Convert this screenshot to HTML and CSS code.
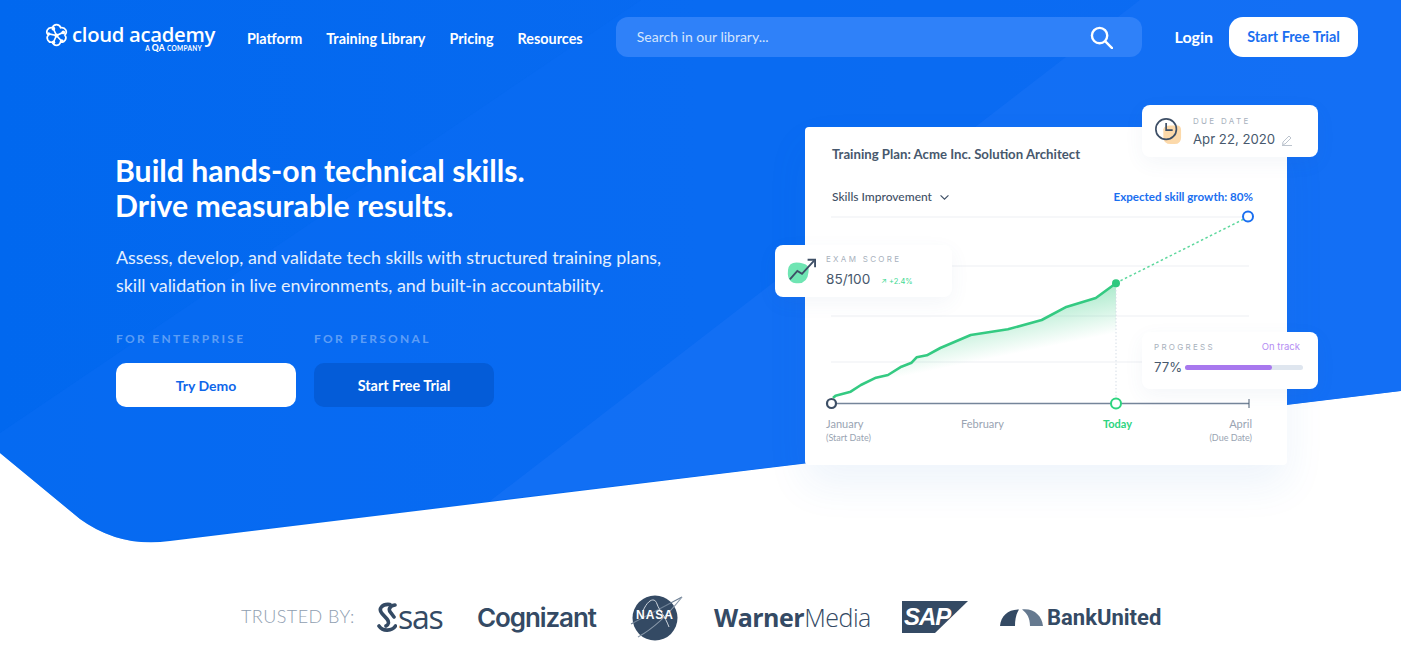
FILE: index.html
```html
<!DOCTYPE html>
<html lang="en">
<head>
    <meta charset="UTF-8">
    <meta name="viewport" content="width=device-width, initial-scale=1.0">
    <title>Cloud Academy</title>
    <link rel="stylesheet" href="styles.css">
</head>
<body>
    <!-- Blue background shape -->
    <svg class="hero-bg" viewBox="0 0 1401 663" aria-hidden="true">
        <defs>
            <linearGradient id="bgBlue" x1="0" y1="0" x2="1" y2="0">
                <stop offset="0" stop-color="#0168ef"/>
                <stop offset="1" stop-color="#0f6cf2"/>
            </linearGradient>
            <clipPath id="bgClip">
                <path d="M0 0H1401V391L170 541Q120 548 80 519L0 453Z"/>
            </clipPath>
        </defs>
        <g clip-path="url(#bgClip)">
            <rect width="1401" height="663" fill="url(#bgBlue)"/>
            <path d="M0 433L641 0H1401V391L490 501L0 560Z" fill="#0a6cf3" opacity="0.5"/>
            <path d="M490 501L1140 0H1401V391Z" fill="#1a72f5" opacity="0.55"/>
        </g>
    </svg>

    <!-- Navbar -->
    <nav class="navbar">
        <a class="logo" href="#">
            <svg class="logo-mark" viewBox="0 0 24 24" fill="none" stroke="#fff" stroke-width="1.600">
                <path d="M12 1.500c2.400 0 3.600 1.600 4 3 2-.4 4 .4 5 2.300 1 2-.1 3.800-1 4.700 1 1.200 1.500 3 .4 4.800-1.100 1.800-3 2.300-4.400 2-.6 1.600-2 3.200-4 3.200s-3.400-1.500-4-3.200c-1.500.4-3.400-.2-4.400-2-1-1.900-.5-3.600.5-4.800-1-1-2-2.800-1-4.700 1-1.900 3-2.700 5-2.300.5-1.500 1.600-3 3.900-3z"/>
                <path d="M12 12L9 5.500M12 12l6.500-3M12 12l5 5.500M12 12l-3 6.500M12 12L4.500 10.500"/>
                <g fill="#fff" stroke="none">
                    <circle cx="12" cy="12" r="2"/>
                    <circle cx="9" cy="5.500" r="1.800"/>
                    <circle cx="18.500" cy="9" r="1.800"/>
                    <circle cx="17" cy="17.500" r="1.800"/>
                    <circle cx="9" cy="18.500" r="1.800"/>
                    <circle cx="4.500" cy="10.500" r="1.600"/>
                </g>
            </svg>
            <span class="logo-text">
                <span class="logo-name">cloud academy</span>
                <span class="logo-sub">A <b>QA</b> COMPANY</span>
            </span>
        </a>
        <div class="nav-links">
            <a href="#">Platform</a>
            <a href="#">Training Library</a>
            <a href="#">Pricing</a>
            <a href="#">Resources</a>
        </div>
        <div class="search">
            <span>Search in our library...</span>
            <svg viewBox="0 0 24 24" fill="none" stroke="#fff" stroke-width="2.500" stroke-linecap="round">
                <circle cx="10" cy="10" r="8"/>
                <path d="M16 16l7 7"/>
            </svg>
        </div>
        <a class="login" href="#">Login</a>
        <a class="nav-trial" href="#">Start Free Trial</a>
    </nav>

    <main class="hero">
        <section class="hero-text">
            <h1>Build hands-on technical skills.<br>Drive measurable results.</h1>
            <p>Assess, develop, and validate tech skills with structured training plans, skill validation in live environments, and built-in accountability.</p>
            <div class="cta-row">
                <div class="cta">
                    <span class="cta-label">FOR ENTERPRISE</span>
                    <a class="btn btn-white" href="#">Try Demo</a>
                </div>
                <div class="cta">
                    <span class="cta-label">FOR PERSONAL</span>
                    <a class="btn btn-dark" href="#">Start Free Trial</a>
                </div>
            </div>
        </section>

        <!-- Training plan card -->
        <section class="plan-card">
            <svg class="chart" viewBox="805 127 482 338" aria-hidden="true">
                <defs>
                    <linearGradient id="areaFill" gradientUnits="userSpaceOnUse" x1="998" y1="306" x2="1008" y2="355">
                        <stop offset="0" stop-color="#2fcb80" stop-opacity="0.42"/>
                        <stop offset="1" stop-color="#2fcb80" stop-opacity="0"/>
                    </linearGradient>
                </defs>
                <g stroke="#f3f5f8" stroke-width="1.500">
                    <path d="M831 217H1249M831 266H1249M831 316H1249M831 362H1249"/>
                </g>
                <path d="M835.500 395.700L850.700 391.700L860.900 385L876 377.700L888 375L901.400 366.700L911.600 362.700L916.600 357.300L926.800 355.300L940.300 348L970.700 335L1007.900 329.300L1041.700 320L1065.400 307.300L1095.800 298L1116 283.300V400H836Z" fill="url(#areaFill)"/>
                <path d="M1116 283V398" stroke="#d5dde6" stroke-dasharray="1.500 2"/>
                <path d="M1116 283L1244 219" stroke="#5fd89e" stroke-width="1.500" stroke-dasharray="2.500 2.500"/>
                <path d="M831 403.500H1249" stroke="#75859a" stroke-width="1.600"/>
                <path d="M1249 399V408" stroke="#4a5c72"/>
                <path d="M833 398L835.500 395.700L850.700 391.700L860.900 385L876 377.700L888 375L901.400 366.700L911.600 362.700L916.600 357.300L926.800 355.300L940.300 348L970.700 335L1007.900 329.300L1041.700 320L1065.400 307.300L1095.800 298L1116 283.300" fill="none" stroke="#34ca82" stroke-width="2.600" stroke-linejoin="round"/>
                <circle cx="1116" cy="283.300" r="4" fill="#2ec97f"/>
                <circle cx="1248" cy="216.500" r="5" fill="#fff" stroke="#1a6ff0" stroke-width="2"/>
                <circle cx="831.500" cy="403.500" r="4.500" fill="#fff" stroke="#3d4f66" stroke-width="2.200"/>
                <circle cx="1116" cy="403.500" r="5" fill="#fff" stroke="#2ed47f" stroke-width="2"/>
            </svg>

            <h2>Training Plan: Acme Inc. Solution Architect</h2>
            <div class="plan-row">
                <span class="plan-select">Skills Improvement
                    <svg viewBox="0 0 12 8" fill="none" stroke="#3f5066" stroke-width="1.300"><path d="M1.500 1.500L6 6l4.500-4.500"/></svg>
                </span>
                <span class="plan-growth">Expected skill growth: 80%</span>
            </div>
            <div class="axis-labels">
                <div>January<small>(Start Date)</small></div>
                <div>February</div>
                <div class="axis-today">Today</div>
                <div class="axis-end">April<small>(Due Date)</small></div>
            </div>

            <div class="float-card due-card">
                <svg class="float-icon" viewBox="0 0 30 30" fill="none">
                    <path d="M10 13q1-4 7-4h8q4 0 4 5v8q0 7-7 7h-4q-8 0-8-7z" fill="#fcd9aa"/>
                    <circle cx="13" cy="13" r="11" stroke="#3e4f66" stroke-width="1.800"/>
                    <path d="M13 6.500V14H20" stroke="#3e4f66" stroke-width="1.800"/>
                </svg>
                <div>
                    <span class="float-label">DUE DATE</span>
                    <span class="float-value">Apr 22, 2020
                        <svg class="pencil" viewBox="0 0 12 12" fill="none" stroke="#bcc4ce"><path d="M1.500 10.500L2 8l6-6 2 2-6 6zM1 11.500h10"/></svg>
                    </span>
                </div>
            </div>

            <div class="float-card exam-card">
                <svg class="float-icon" viewBox="0 0 32 30" fill="none">
                    <path d="M1 14q1-8 9-8 4 0 7 1 7 1 6 9-1 12-11 12-5 1-8-2-4-3-3-12z" fill="#6fe5b3"/>
                    <path d="M3 24l8-9 5 3L29 4" stroke="#3e4f66" stroke-width="2"/>
                    <path d="M22 3h8v8" stroke="#3e4f66" stroke-width="2"/>
                </svg>
                <div>
                    <span class="float-label">EXAM SCORE</span>
                    <span class="float-value">85/100 <em>&#8599; +2.4%</em></span>
                </div>
            </div>

            <div class="float-card progress-card">
                <div class="progress-head">
                    <span class="float-label">PROGRESS</span>
                    <span class="on-track">On track</span>
                </div>
                <div class="progress-body">
                    <span class="float-value">77%</span>
                    <span class="bar"><span class="bar-fill" style="width: 74%"></span></span>
                </div>
            </div>
        </section>
    </main>

    <!-- Customer logos -->
    <footer class="trusted">
        <span class="trusted-label">TRUSTED BY:</span>
        <span class="brand brand-sas">
            <svg viewBox="0 0 20 30" fill="none" stroke="#344a64" stroke-width="3.600" stroke-linecap="round">
                <path d="M13 2.500C5 1.500 1 7 5 11.500L10 17C12.500 20 11.500 23 9 24"/>
                <path d="M18 3C12 4 11 8 14 11L17 15"/>
                <path d="M2 24C6 30 15 29 18.500 24"/>
            </svg>
            sas
        </span>
        <span class="brand brand-cognizant">Cognizant</span>
        <span class="brand brand-nasa">
            <svg viewBox="0 0 54 48" fill="none">
                <circle cx="25" cy="25" r="22.500" fill="#344a64"/>
                <path d="M1 31L52 4" stroke="#6e8095" stroke-width="1.200"/>
                <path d="M8 44Q30 32 52 4" stroke="#8a99aa" stroke-width="1.200"/>
                <path d="M13 18c5-12 12-14 14-7 2 6 8 12 12 23" stroke="#cfd6de" stroke-width="1"/>
            </svg>
            <span>NASA</span>
        </span>
        <span class="brand brand-warner"><b>Warner</b>Media</span>
        <span class="brand brand-sap"><span>SAP</span></span>
        <span class="brand brand-bank">
            <svg viewBox="0 0 44 18">
                <path d="M0 18C1 8 8 1.500 19 1.500C16 6 15 12 15 18Z" fill="#344a64"/>
                <path d="M22 1.500C34 0 42 8 43 18H30C30 10 27 5 22 1.500Z" fill="#667a90"/>
            </svg>
            BankUnited
        </span>
    </footer>
</body>
</html>
```

FILE: styles.css
```css
* {
    box-sizing: border-box;
    margin: 0;
    padding: 0;
}

html, body {
    height: 663px;
    overflow: hidden;
}

body {
    font-family: Lato, "Open Sans", sans-serif;
    background-color: #fff;
    color: #344a64;
    position: relative;
}

a {
    color: inherit;
    text-decoration: none;
}

.hero-bg {
    position: absolute;
    top: 0;
    left: 0;
    width: 1401px;
    height: 663px;
}

/* Navbar */
.navbar {
    position: relative;
    display: flex;
    align-items: center;
    height: 74px;
    padding: 17px 43px 17px 44px;
    color: #fff;
}

.logo {
    display: flex;
    align-items: flex-start;
    gap: 3px;
    width: 203px;
    height: 40px;
}

.logo-mark {
    width: 25px;
    height: 25px;
    margin-top: 6px;
    flex: none;
}

.logo-text {
    display: flex;
    flex-direction: column;
    align-items: flex-end;
}

.logo-name {
    font-family: "Open Sans", Lato, sans-serif;
    font-size: 20.300px;
    font-weight: 600;
    letter-spacing: -0.300px;
    line-height: 18px;
    margin-top: 8px;
}

.logo-sub {
    margin-top: 2px;
    margin-right: 13px;
    font-size: 6.500px;
    font-weight: 700;
    letter-spacing: 0.300px;
    line-height: 6px;
}

.logo-sub b {
    font-size: 8.500px;
    line-height: 6px;
}

.nav-links {
    display: flex;
    gap: 24px;
    width: 369px;
    margin-top: 2px;
    font-size: 14.400px;
    font-weight: 700;
}

.search {
    display: flex;
    align-items: center;
    justify-content: space-between;
    width: 526px;
    height: 40px;
    padding: 0 29px 0 21px;
    background-color: #2f81f9;
    border-radius: 12px;
    font-size: 14px;
    color: #d5e5fd;
}

.search span {
    margin-top: -2px;
}

.search svg {
    width: 23px;
    height: 23px;
}

.login {
    margin-left: 33px;
    margin-top: -2px;
    font-size: 16px;
    font-weight: 700;
}

.nav-trial {
    display: flex;
    align-items: center;
    justify-content: center;
    width: 129px;
    height: 40px;
    margin-left: 16px;
    padding-bottom: 2px;
    background-color: #fff;
    border-radius: 14px;
    color: #1a6ff0;
    font-size: 14.400px;
    font-weight: 700;
}

/* Hero */
.hero {
    position: relative;
    display: flex;
    align-items: flex-start;
    padding: 53px 0 0 116px;
}

.hero-text {
    width: 689px;
    padding-top: 26px;
    color: #fff;
}

.hero-text h1 {
    margin-left: -1px;
    font-size: 30.200px;
    font-weight: 700;
    line-height: 35px;
}

.hero-text p {
    width: 560px;
    margin-top: 20px;
    font-size: 17.900px;
    line-height: 28px;
    color: #e4effe;
}

.cta-row {
    display: flex;
    gap: 18px;
    margin-top: 32px;
}

.cta {
    width: 180px;
}

.cta-label {
    display: block;
    font-size: 12px;
    font-weight: 700;
    letter-spacing: 2.300px;
    line-height: 15px;
    color: rgba(255, 255, 255, 0.36);
}

.btn {
    display: flex;
    align-items: center;
    justify-content: center;
    height: 44px;
    margin-top: 17px;
    border-radius: 10px;
    font-size: 14px;
    font-weight: 700;
}

.btn-white {
    background-color: #fff;
    color: #0f66ea;
}

.btn-dark {
    background-color: #045cd8;
    color: #fff;
    font-size: 14.400px;
}

/* Training plan card */
.plan-card {
    position: relative;
    width: 482px;
    height: 338px;
    padding: 19px 34px 0 27px;
    background-color: #fff;
    border-radius: 4px;
    box-shadow: 0 20px 40px rgba(40, 110, 200, 0.08);
}

.chart {
    position: absolute;
    top: 0;
    left: 0;
    width: 482px;
    height: 338px;
}

.plan-card h2 {
    position: relative;
    font-size: 13.200px;
    font-weight: 700;
    line-height: 17px;
    color: #47586d;
}

.plan-row {
    position: relative;
    display: flex;
    justify-content: space-between;
    margin-top: 26px;
    font-size: 12px;
    line-height: 16px;
}

.plan-select {
    font-weight: 500;
    color: #3f5066;
}

.plan-select svg {
    width: 11px;
    height: 7px;
    margin-left: 4px;
}

.plan-growth {
    font-size: 11.600px;
    font-weight: 700;
    color: #1a6ff0;
}

.axis-labels {
    position: relative;
    display: grid;
    grid-template-columns: 135px 142px 60px 89px;
    margin: 212px 0 0 -6px;
    font-size: 11px;
    line-height: 14px;
    color: #99a4b2;
}

.axis-labels small {
    display: block;
    font-size: 9px;
    line-height: 14px;
}

.axis-today {
    font-weight: 700;
    color: #2ed47f;
}

.axis-end {
    text-align: right;
}

/* Floating cards */
.float-card {
    position: absolute;
    display: flex;
    align-items: center;
    gap: 11px;
    width: 176px;
    background-color: #fff;
    border-radius: 8px;
    box-shadow: 0 6px 20px rgba(60, 100, 160, 0.06);
    font-family: Inter, Roboto, sans-serif;
}

.due-card {
    left: 337px;
    top: -22px;
    height: 52px;
    padding-left: 12px;
}

.exam-card {
    left: -30px;
    top: 118px;
    width: 177px;
    height: 52px;
    padding-left: 11px;
    gap: 8px;
}

.progress-card {
    left: 337px;
    top: 205px;
    height: 57px;
    display: block;
    padding: 9px 15px 0 12px;
}

.float-icon {
    width: 28px;
    height: 28px;
    flex: none;
}

.exam-card .float-icon {
    width: 32px;
    height: 28px;
}

.float-label {
    display: block;
    font-size: 8px;
    letter-spacing: 2.300px;
    line-height: 12px;
    color: #a8b1bd;
}

.float-value {
    display: block;
    margin-top: 4px;
    font-size: 13.200px;
    line-height: 17px;
    color: #47586d;
}

.exam-card .float-label {
    margin-top: 1px;
}

.exam-card .float-value {
    margin-top: 6px;
    font-size: 13.600px;
}

.float-value em {
    margin-left: 7px;
    font-size: 7.500px;
    font-style: normal;
    color: #41d992;
}

.pencil {
    width: 12px;
    height: 12px;
    margin-left: 2px;
    vertical-align: -2px;
}

.progress-head {
    display: flex;
    justify-content: space-between;
}

.on-track {
    margin-right: 3px;
    font-size: 9.500px;
    line-height: 12px;
    color: #b48df3;
}

.progress-body {
    display: flex;
    align-items: center;
    gap: 3px;
    margin-top: 6px;
}

.progress-body .float-value {
    margin-top: 0;
}

.bar {
    flex: 1;
    height: 5px;
    background-color: #dfe6ef;
    border-radius: 3px;
}

.bar-fill {
    display: block;
    height: 5px;
    background-color: #a878ee;
    border-radius: 3px;
}

/* Customer logos */
.trusted {
    position: absolute;
    top: 590px;
    left: 241px;
    display: flex;
    align-items: center;
    height: 54px;
}

.trusted-label {
    width: 136px;
    margin-top: -2px;
    font-size: 18px;
    font-weight: 300;
    letter-spacing: 0.450px;
    color: #8f9eb0;
}

.brand {
    display: flex;
    align-items: center;
    color: #344a64;
}

.brand-sas {
    width: 100px;
    font-family: "Open Sans", sans-serif;
    font-size: 32px;
    font-weight: 500;
    letter-spacing: -1.300px;
    line-height: 30px;
}

.brand-sas svg {
    width: 20px;
    height: 30px;
    margin-right: 1px;
}

.brand-cognizant {
    width: 153px;
    font-family: Inter, sans-serif;
    font-size: 26px;
    font-weight: 600;
    letter-spacing: -1.100px;
}

.brand-nasa {
    position: relative;
    width: 84px;
    height: 48px;
}

.brand-nasa svg {
    width: 54px;
    height: 48px;
}

.brand-nasa span {
    position: absolute;
    left: 6px;
    top: 15px;
    font-family: "Liberation Sans", sans-serif;
    font-size: 12px;
    font-weight: 700;
    letter-spacing: 1px;
    color: #fff;
}

.brand-warner {
    width: 188px;
    font-family: "Open Sans", sans-serif;
    font-size: 25px;
    font-weight: 300;
    letter-spacing: -0.500px;
}

.brand-warner b {
    font-weight: 700;
}

.brand-sap {
    width: 98px;
}

.brand-sap span {
    display: block;
    width: 66px;
    height: 32px;
    padding-left: 2px;
    background-color: #344a64;
    clip-path: polygon(0 0, 100% 0, 50% 100%, 0 100%);
    font-family: "Liberation Sans", sans-serif;
    font-size: 24px;
    font-style: italic;
    font-weight: 700;
    line-height: 32px;
    letter-spacing: -1px;
    color: #fff;
}

.brand-bank {
    gap: 3px;
    font-family: Roboto, sans-serif;
    font-size: 22px;
    font-weight: 700;
}

.brand-bank svg {
    width: 44px;
    height: 18px;
}
```
